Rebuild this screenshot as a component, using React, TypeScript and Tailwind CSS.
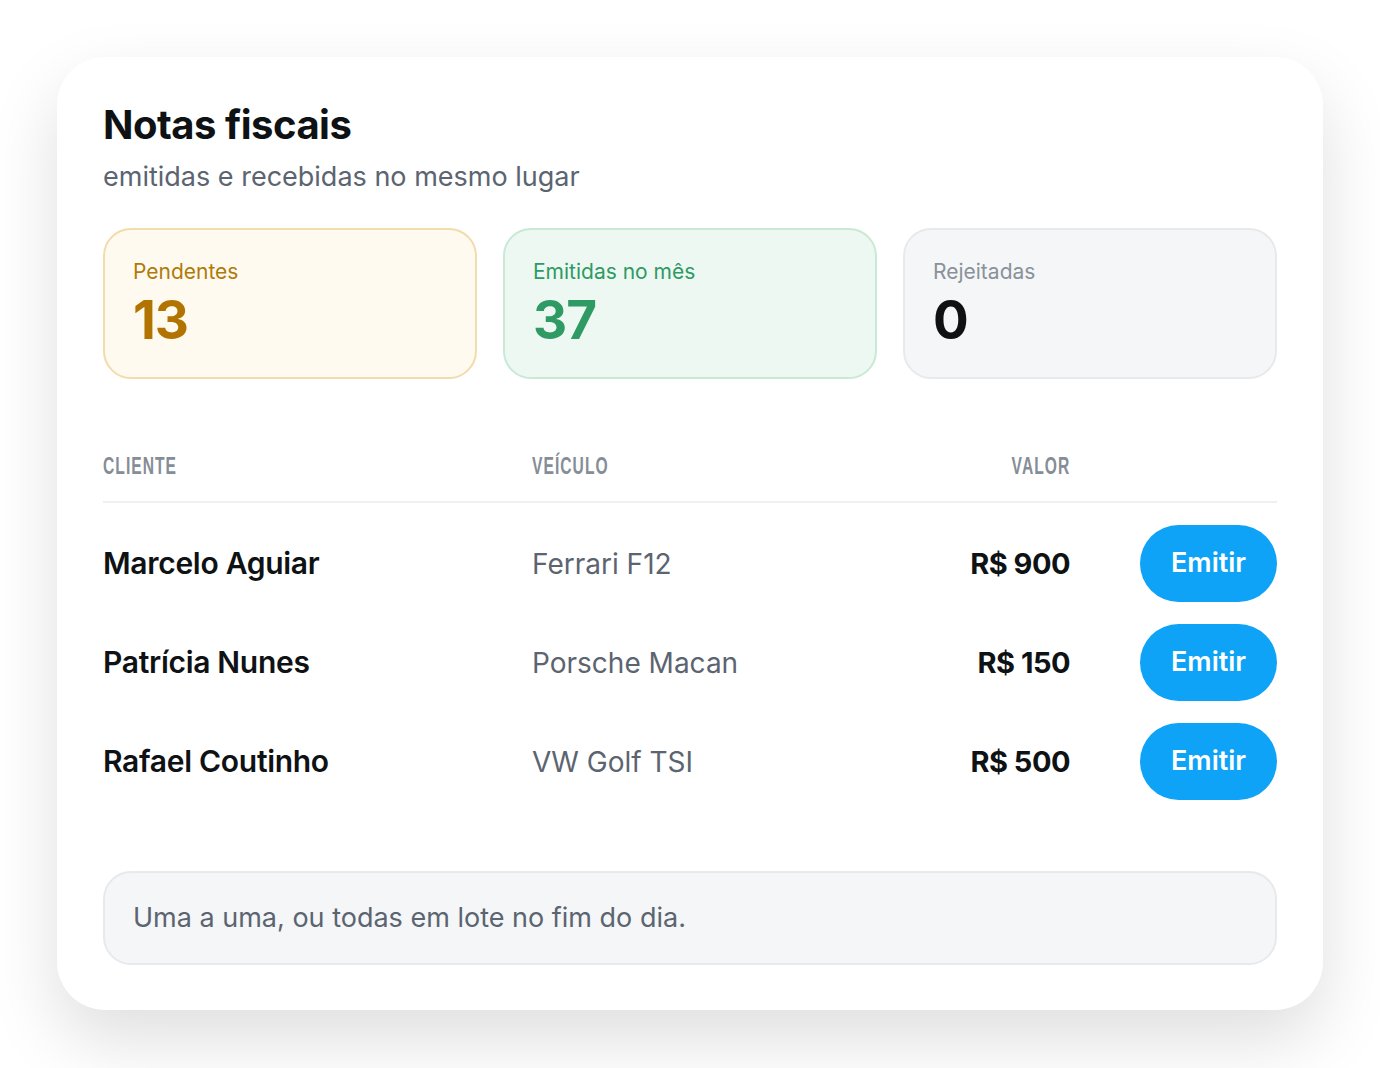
import React from 'react';

const rows = [
  { name: 'Marcelo Aguiar', car: 'Ferrari F12', value: 'R$ 900' },
  { name: 'Patrícia Nunes', car: 'Porsche Macan', value: 'R$ 150' },
  { name: 'Rafael Coutinho', car: 'VW Golf TSI', value: 'R$ 500' },
];

const stats = [
  { label: 'Pendentes', value: '13', box: 'bg-[#fffaf0] border-[#f1dcaa]', label_c: 'text-[#b07a0a]', num_c: 'text-[#b27400]' },
  { label: 'Emitidas no mês', value: '37', box: 'bg-[#eef8f2] border-[#c8e9d6]', label_c: 'text-[#2f9a64]', num_c: 'text-[#2f9a64]' },
  { label: 'Rejeitadas', value: '0', box: 'bg-[#f4f6f8] border-[#e7eaed]', label_c: 'text-[#8a9199]', num_c: 'text-[#0f1113]' },
];

const condensed = { fontFamily: '"Liberation Sans", Arial, sans-serif' };

export default function App() {
  return (
    <div
      className="min-h-screen w-full bg-white pt-[57px] pl-[57px]"
      style={{ fontFamily: 'Inter, "Noto Sans", sans-serif' }}
    >
      <div className="w-[1266px] h-[953px] rounded-[48px] bg-white px-[46px] pt-[44px] shadow-[0_30px_70px_rgba(0,0,0,0.13)] flex flex-col">
        {/* Heading */}
        <h1 className="text-[40px] leading-[48px] font-bold text-[#0f1214] tracking-[-0.5px]">Notas fiscais</h1>
        <p className="text-[27px] leading-[34px] text-[#5b6470] mt-[11px]">emitidas e recebidas no mesmo lugar</p>

        {/* Stat cards */}
        <div className="grid grid-cols-3 gap-[26px] mt-[34px]">
          {stats.map((s) => (
            <div key={s.label} className={`h-[151px] rounded-[28px] border-2 ${s.box} px-[28px] pt-[28px]`}>
              <div className={`text-[21px] leading-[28px] ${s.label_c}`}>{s.label}</div>
              <div className={`text-[53px] leading-[60px] font-bold mt-[4px] tracking-[-1px] ${s.num_c}`}>{s.value}</div>
            </div>
          ))}
        </div>

        {/* Table header */}
        <div
          className="flex items-center mt-[75px] pb-[23px] border-b-2 border-[#eef0f3] text-[#858d96] text-[23px] leading-[24px] font-bold tracking-[1.5px]"
          style={condensed}
        >
          <div className="w-[429px]">
            <span className="inline-block origin-left scale-x-[0.68]">CLIENTE</span>
          </div>
          <div className="flex-1">
            <span className="inline-block origin-left scale-x-[0.68]">VEÍCULO</span>
          </div>
          <div className="w-[200px] text-right">
            <span className="inline-block origin-right scale-x-[0.68]">VALOR</span>
          </div>
          <div className="w-[137px] ml-[70px]" />
        </div>

        {/* Rows */}
        <div className="flex flex-col gap-[22px] mt-[22px]">
          {rows.map((r) => (
            <div key={r.name} className="flex items-center h-[77px]">
              <div className="w-[429px] text-[30px] font-semibold text-[#0f1214] tracking-[-0.3px]">{r.name}</div>
              <div className="flex-1 text-[28px] text-[#5b6470]">{r.car}</div>
              <div className="w-[200px] text-right text-[29px] font-bold text-[#0f1214] tracking-[-0.5px]">{r.value}</div>
              <button className="w-[137px] h-[77px] ml-[70px] rounded-full bg-[#0fa3f7] text-white text-[27px] font-semibold">
                Emitir
              </button>
            </div>
          ))}
        </div>

        {/* Footer note */}
        <div className="mt-[71px] h-[94px] rounded-[28px] border-2 border-[#e7eaed] bg-[#f4f6f8] flex items-center px-[28px]">
          <span className="text-[27px] text-[#5b6470]">Uma a uma, ou todas em lote no fim do dia.</span>
        </div>
      </div>
    </div>
  );
}
